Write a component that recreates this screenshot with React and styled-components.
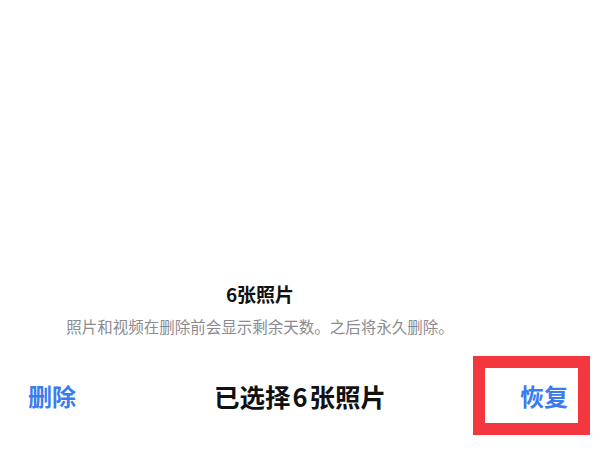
import React from "react";
import styled, { createGlobalStyle } from "styled-components";

const GlobalStyle = createGlobalStyle`
  html, body {
    margin: 0;
    padding: 0;
    background: #ffffff;
  }
  body {
    font-family: "Noto Sans CJK SC", "Noto Sans", sans-serif;
  }
`;

const Page = styled.div`
  width: 600px;
  height: 458px;
  display: flex;
  flex-direction: column;
  background: #ffffff;
  overflow: hidden;
`;

const Info = styled.div`
  margin-top: 280px;
  padding-right: 80px;
  display: flex;
  flex-direction: column;
  align-items: center;
`;

const Title = styled.div`
  font-size: 19px;
  line-height: 28px;
  font-weight: 700;
  color: #111111;
`;

const Note = styled.div`
  margin-top: 6px;
  font-size: 15.5px;
  line-height: 24px;
  color: #8b8b8f;
`;

const Bar = styled.div`
  margin-top: 18px;
  display: grid;
  grid-template-columns: 1fr auto 1fr;
  align-items: center;
  padding: 0 10px;
`;

const Action = styled.div`
  font-size: 24px;
  line-height: 32px;
  font-weight: 700;
  color: #3a7cf0;
  justify-self: ${(p) => (p.$end ? "end" : "start")};
  margin-left: ${(p) => (p.$end ? "0" : "18px")};
`;

const Selected = styled.div`
  font-size: 25.5px;
  line-height: 32px;
  font-weight: 700;
  color: #111111;
`;

const Count = styled.span`
  margin: 0 2px;
`;

const Highlight = styled.div`
  justify-self: end;
  width: 83px;
  height: 55px;
  border: 12px solid #f4363f;
  display: flex;
  align-items: center;
  justify-content: flex-end;
  padding-right: 10px;
  box-sizing: content-box;
`;

export default function App() {
  return (
    <>
      <GlobalStyle />
      <Page>
        <Info>
          <Title>6张照片</Title>
          <Note>照片和视频在删除前会显示剩余天数。之后将永久删除。</Note>
        </Info>
        <Bar>
          <Action>删除</Action>
          <Selected>
            已选择<Count>6</Count>张照片
          </Selected>
          <Highlight>
            <Action $end>恢复</Action>
          </Highlight>
        </Bar>
      </Page>
    </>
  );
}
